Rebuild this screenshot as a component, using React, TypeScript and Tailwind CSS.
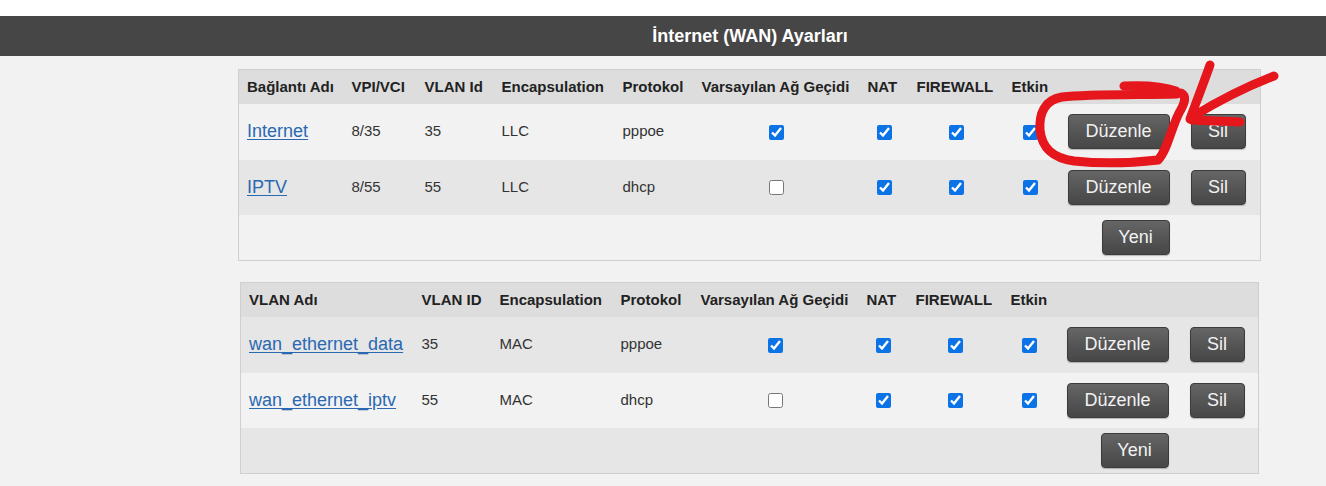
import React from 'react';

type Row = {
  name: string;
  vpi?: string;
  vlan: string;
  enc: string;
  proto: string;
  gw: boolean;
};

const wanRows: Row[] = [
  { name: 'Internet', vpi: '8/35', vlan: '35', enc: 'LLC', proto: 'pppoe', gw: true },
  { name: 'IPTV', vpi: '8/55', vlan: '55', enc: 'LLC', proto: 'dhcp', gw: false },
];

const vlanRows: Row[] = [
  { name: 'wan_ethernet_data', vlan: '35', enc: 'MAC', proto: 'pppoe', gw: true },
  { name: 'wan_ethernet_iptv', vlan: '55', enc: 'MAC', proto: 'dhcp', gw: false },
];

const Btn = ({ label, w }: { label: string; w: string }) => (
  <button
    className={`${w} h-[35px] rounded-[4px] border border-[#3c3c3c] bg-gradient-to-b from-[#666] via-[#555] to-[#474747] text-[18px] text-[#f2f2f2] shadow-[0_1px_1px_rgba(0,0,0,0.25)]`}
  >
    {label}
  </button>
);

const Check = ({ on }: { on: boolean }) => (
  <input type="checkbox" readOnly checked={on} className="m-0 h-[15px] w-[15px] align-middle accent-[#0b73e6]" />
);

const th = 'pl-2 text-left font-bold text-[#222]';

const WanTable = ({ rows, vlan }: { rows: Row[]; vlan?: boolean }) => {
  const cols = vlan
    ? ['w-[173px]', 'w-[78px]', 'w-[121px]', 'w-[80px]', 'w-[166px]', 'w-[49px]', 'w-[95px]', 'w-[54px]', 'w-[122px]', 'w-[77px]']
    : ['w-[105px]', 'w-[73px]', 'w-[77px]', 'w-[121px]', 'w-[79px]', 'w-[166px]', 'w-[49px]', 'w-[95px]', 'w-[54px]', 'w-[122px]', 'w-[77px]'];
  const shade = (i: number) => (vlan ? (i % 2 === 0 ? 'bg-[#e6e6e6]' : 'bg-[#f2f2f2]') : i % 2 === 0 ? 'bg-[#f2f2f2]' : 'bg-[#e6e6e6]');

  return (
    <table className={`table-fixed border-collapse border border-[#cfcfcf] text-[15px] text-[#333] ${vlan ? 'ml-[2px] w-[1019px]' : 'w-[1023px]'}`}>
      <colgroup>
        {cols.map((c, i) => (
          <col key={i} className={c} />
        ))}
        <col />
      </colgroup>
      <thead>
        <tr className="h-[34px] bg-[#dddddd]">
          {vlan ? (
            <>
              <th className={th}>VLAN Adı</th>
              <th className={th}>VLAN ID</th>
            </>
          ) : (
            <>
              <th className={th}>Bağlantı Adı</th>
              <th className={th}>VPI/VCI</th>
              <th className={th}>VLAN Id</th>
            </>
          )}
          <th className={th}>Encapsulation</th>
          <th className={th}>Protokol</th>
          <th className={th}>Varsayılan Ağ Geçidi</th>
          <th className={th}>NAT</th>
          <th className={th}>FIREWALL</th>
          <th className={th}>Etkin</th>
          <th />
          <th />
          <th />
        </tr>
      </thead>
      <tbody>
        {rows.map((r, i) => (
          <tr key={r.name} className={`${i === 0 ? 'h-[56px]' : 'h-[55px]'} ${shade(i)}`}>
            <td className="pl-2">
              <a href="#" className="text-[18px] text-[#2a68b2] underline underline-offset-2">
                {r.name}
              </a>
            </td>
            {!vlan && <td className="pl-2">{r.vpi}</td>}
            <td className="pl-2">{r.vlan}</td>
            <td className="pl-2">{r.enc}</td>
            <td className="pl-2">{r.proto}</td>
            <td className="text-center">
              <Check on={r.gw} />
            </td>
            <td className="text-center">
              <Check on />
            </td>
            <td className="text-center">
              <Check on />
            </td>
            <td className="text-center">
              <Check on />
            </td>
            <td className="px-[10px] text-right">
              <Btn label="Düzenle" w="w-[102px]" />
            </td>
            <td className="pl-[11px] text-left">
              <Btn label="Sil" w="w-[55px]" />
            </td>
            <td />
          </tr>
        ))}
        <tr className={`h-[46px] ${shade(2)}`}>
          <td colSpan={vlan ? 8 : 9} />
          <td className="px-[10px] text-right">
            <Btn label="Yeni" w="w-[68px]" />
          </td>
          <td />
          <td />
        </tr>
      </tbody>
    </table>
  );
};

// red marker scribble drawn on top of the screenshot
const Scribble = () => (
  <svg className="pointer-events-none absolute left-0 top-0" width="1326" height="486" fill="none">
    <g stroke="#e5161c" strokeWidth="9" strokeLinecap="round" strokeLinejoin="round">
      <path d="M1124 86 C1145 85 1165 87 1176 91" />
      <path d="M1177 94 C1140 95 1090 94 1062 97 C1044 100 1039 114 1040 130 C1042 148 1052 158 1074 161 C1102 164 1132 163 1158 160 C1167 151 1171 129 1179 113 C1185 103 1187 96 1181 93" />
      <path d="M1210 65 C1204 82 1197 100 1190 119" />
      <path d="M1274 76 C1248 86 1218 101 1192 117" />
      <path d="M1192 120 C1208 121 1224 121 1240 122" />
    </g>
  </svg>
);

export default function App() {
  return (
    <div className="relative min-h-screen bg-[#f2f2f2] font-['Liberation_Sans',Arial,sans-serif]">
      <div className="h-4 bg-white" />
      <div className="flex h-10 items-center justify-center bg-[#464646] pl-[174px] text-[18px] font-bold text-white">
        İnternet (WAN) Ayarları
      </div>
      <div className="flex flex-col gap-[21px] pl-[238px] pt-[13px]">
        <WanTable rows={wanRows} />
        <WanTable rows={vlanRows} vlan />
      </div>
      <Scribble />
    </div>
  );
}
